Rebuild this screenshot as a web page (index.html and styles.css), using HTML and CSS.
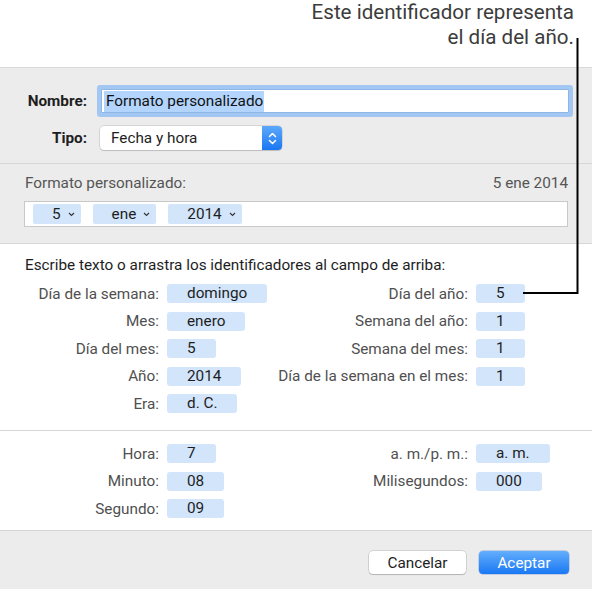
FILE: index.html
```html
<!DOCTYPE html>
<html lang="es">
<head>
<meta charset="utf-8">
<title>Formato personalizado</title>
<link rel="stylesheet" href="styles.css">
</head>
<body>
<div class="page">
  <div class="callout">
    <p class="callout-text">Este identificador representa<br>el día del año.</p>
  </div>
  <div class="dialog">
    <section class="sec sec-name">
      <label class="name-label">Nombre:</label>
      <div class="text-input"><span class="selected">Formato personalizado</span></div>
      <label class="name-label">Tipo:</label>
      <div class="popup">
        <span class="popup-text">Fecha y hora</span>
        <span class="stepper">
          <svg width="9" height="15" viewBox="0 0 9 15"><polyline points="1.5,5.5 4.5,2.5 7.5,5.5" fill="none" stroke="#fff" stroke-width="1.5" stroke-linecap="round" stroke-linejoin="round"/><polyline points="1.5,9.5 4.5,12.5 7.5,9.5" fill="none" stroke="#fff" stroke-width="1.5" stroke-linecap="round" stroke-linejoin="round"/></svg>
        </span>
      </div>
    </section>

    <section class="sec sec-format">
      <div class="format-head">
        <span>Formato personalizado:</span>
        <span>5 ene 2014</span>
      </div>
      <div class="format-field">
        <span class="ftoken">5<svg class="chev" width="7" height="5" viewBox="0 0 7 5"><polyline points="1,1 3.5,3.5 6,1" fill="none" stroke="#333" stroke-width="1.1"/></svg></span>
        <span class="ftoken">ene<svg class="chev" width="7" height="5" viewBox="0 0 7 5"><polyline points="1,1 3.5,3.5 6,1" fill="none" stroke="#333" stroke-width="1.1"/></svg></span>
        <span class="ftoken">2014<svg class="chev" width="7" height="5" viewBox="0 0 7 5"><polyline points="1,1 3.5,3.5 6,1" fill="none" stroke="#333" stroke-width="1.1"/></svg></span>
      </div>
    </section>

    <section class="sec sec-date">
      <p class="instructions">Escribe texto o arrastra los identificadores al campo de arriba:</p>
      <div class="grid">
        <span class="lbl">Día de la semana:</span><span class="tok">domingo</span>
        <span class="lbl">Día del año:</span><span class="tok">5</span>

        <span class="lbl">Mes:</span><span class="tok">enero</span>
        <span class="lbl">Semana del año:</span><span class="tok">1</span>

        <span class="lbl">Día del mes:</span><span class="tok">5</span>
        <span class="lbl">Semana del mes:</span><span class="tok">1</span>

        <span class="lbl">Año:</span><span class="tok">2014</span>
        <span class="lbl">Día de la semana en el mes:</span><span class="tok">1</span>

        <span class="lbl">Era:</span><span class="tok">d. C.</span>
      </div>
    </section>

    <section class="sec sec-time">
      <div class="grid">
        <span class="lbl">Hora:</span><span class="tok">7</span>
        <span class="lbl">a. m./p. m.:</span><span class="tok">a. m.</span>

        <span class="lbl">Minuto:</span><span class="tok">08</span>
        <span class="lbl">Milisegundos:</span><span class="tok">000</span>

        <span class="lbl">Segundo:</span><span class="tok">09</span>
      </div>
    </section>

    <footer class="sec sec-buttons">
      <button class="btn btn-cancel">Cancelar</button>
      <button class="btn btn-ok">Aceptar</button>
    </footer>
  </div>

  <svg class="leader" width="594" height="592" viewBox="0 0 594 592">
    <polyline points="577.5,38 577.5,293 523,293" fill="none" stroke="#000" stroke-width="2"/>
  </svg>
</div>
</body>
</html>
```

FILE: styles.css
```css
* { box-sizing: border-box; }

html, body {
  margin: 0;
  padding: 0;
  background: #fff;
}

body {
  font-family: Roboto, "Liberation Sans", Arial, sans-serif;
  font-size: 15.3px;
  color: #222;
}

.page {
  position: relative;
  width: 594px;
  height: 592px;
  overflow: hidden;
}

/* Callout */
.callout {
  height: 67px;
  padding: 0 20px 0 0;
}

.callout-text {
  margin: 0;
  padding-top: 0;
  text-align: right;
  font-size: 20.6px;
  line-height: 25px;
  color: #3c3c3c;
}

.leader {
  position: absolute;
  left: 0;
  top: 0;
  pointer-events: none;
}

/* Dialog */
.dialog {
  width: 592px;
  border-top: 1px solid #d9d9d9;
}

.sec {
  border-bottom: 1px solid #d6d6d6;
}

.sec-name {
  background: #ececec;
  height: 96px;
  padding: 21px 23px 0 0;
  display: grid;
  grid-template-columns: 87px 1fr;
  grid-auto-rows: 24px;
  column-gap: 14px;
  row-gap: 13px;
  align-items: center;
  align-content: start;
}

.name-label {
  text-align: right;
  font-weight: bold;
  color: #1e1e1e;
}

.text-input {
  height: 24px;
  background: #fff;
  border: 1px solid #8fb6e6;
  border-radius: 1px;
  box-shadow: 0 0 0 4px #a2c7f3;
  padding: 1px 0 0 2px;
  display: flex;
  align-items: center;
}

.selected {
  background: #b3d5fd;
  line-height: 21px;
  padding: 0 1px 0 2px;
  color: #111;
}

.popup {
  width: 182px;
  height: 24px;
  margin-left: -1px;
  background: #fff;
  border-radius: 4px;
  box-shadow: 0 0 0 0.5px rgba(0,0,0,0.18), 0 1px 1px rgba(0,0,0,0.12);
  display: flex;
  align-items: center;
  justify-content: space-between;
}

.popup-text {
  padding-left: 11px;
  color: #1e1e1e;
}

.stepper {
  width: 20px;
  height: 24px;
  border-radius: 0 4px 4px 0;
  background: linear-gradient(#5ca9fb, #1b76f2);
  display: flex;
  align-items: center;
  justify-content: center;
}

/* Format */
.sec-format {
  background: #ececec;
  height: 80px;
  padding: 10px 24px 0 24px;
}

.format-head {
  display: flex;
  justify-content: space-between;
  line-height: 18px;
  color: #555;
  padding-left: 1px;
}

.format-field {
  margin-top: 9px;
  height: 26px;
  background: #fff;
  border: 1px solid #c9c9c9;
  display: flex;
  align-items: center;
  gap: 12px;
  padding-left: 8px;
}

.ftoken {
  height: 20px;
  background: #d2e5fb;
  border-radius: 2px;
  padding: 0 6px 0 19px;
  display: flex;
  align-items: center;
  gap: 7px;
  color: #1e1e1e;
}

.chev { display: block; margin-top: 1px; }

/* Date identifiers */
.sec-date {
  background: #fff;
  height: 187px;
  padding: 12px 0 0 0;
}

.instructions {
  margin: 0 0 10px 25px;
  line-height: 18px;
  color: #1e1e1e;
}

.grid {
  display: grid;
  grid-template-columns: 159px 101px 192px auto;
  column-gap: 8px;
  row-gap: 8.5px;
  grid-auto-rows: 19px;
  align-items: center;
}

.lbl {
  text-align: right;
  color: #505050;
  white-space: nowrap;
}

.tok {
  justify-self: start;
  height: 19px;
  line-height: 19px;
  padding: 0 20px;
  background: #d2e5fb;
  border-radius: 3px;
  color: #1e1e1e;
  white-space: nowrap;
}

.sec-time {
  background: #fff;
  height: 100px;
  padding-top: 13px;
}

/* Buttons */
.sec-buttons {
  background: #ececec;
  height: 58px;
  border-bottom: none;
  padding: 20px 23px 0 0;
  display: flex;
  justify-content: flex-end;
  gap: 13px;
}

.btn {
  height: 23px;
  border-radius: 4px;
  font-family: inherit;
  font-size: 15.3px;
  padding: 0;
  border: none;
}

.btn-cancel {
  width: 97px;
  background: #fff;
  color: #1e1e1e;
  box-shadow: 0 0 0 0.5px rgba(0,0,0,0.22), 0 1px 1px rgba(0,0,0,0.14);
}

.btn-ok {
  width: 90px;
  color: #fff;
  background: linear-gradient(#63aefc, #1a78f4);
  box-shadow: 0 0 0 0.5px rgba(0,60,180,0.35);
}
```
